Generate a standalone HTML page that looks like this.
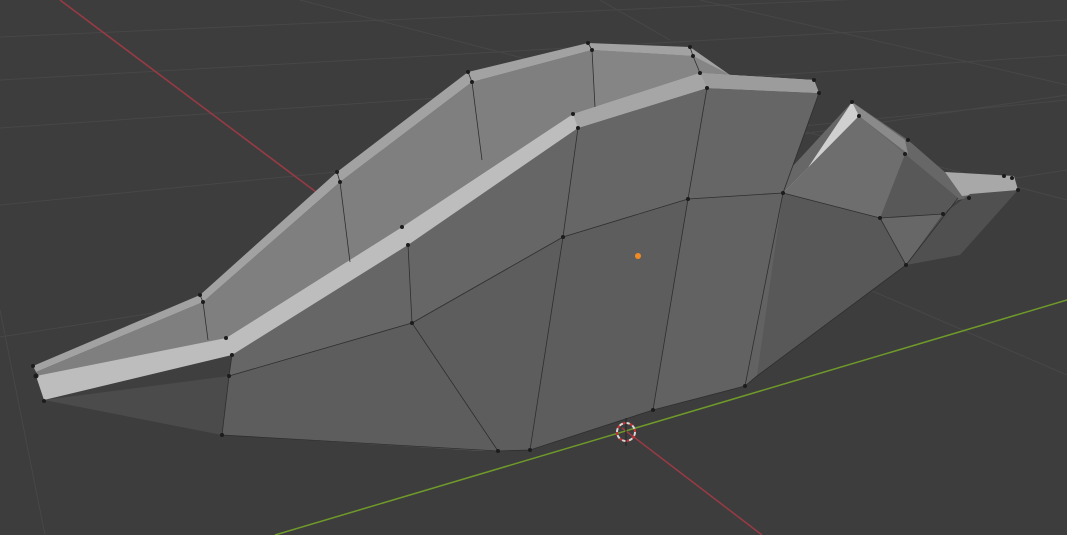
<!DOCTYPE html>
<html><head><style>
html,body{margin:0;padding:0;background:#3d3d3d;width:1067px;height:535px;overflow:hidden}
svg{display:block}
</style></head><body>
<svg width="1067" height="535" viewBox="0 0 1067 535" xmlns="http://www.w3.org/2000/svg">
<rect width="1067" height="535" fill="#3d3d3d"/>
<g stroke="#474747" stroke-width="1" fill="none">
<line x1="0" y1="37" x2="1067" y2="-10"/>
<line x1="0" y1="80" x2="1067" y2="20"/>
<line x1="0" y1="128" x2="1067" y2="55"/>
<line x1="0" y1="205" x2="1067" y2="100"/>
<line x1="0" y1="337" x2="1067" y2="170"/>
<line x1="390" y1="195" x2="1067" y2="95"/>
<line x1="300" y1="0" x2="1067" y2="200"/>
<line x1="700" y1="0" x2="1067" y2="85"/>
<line x1="870" y1="290" x2="1067" y2="375"/>
<line x1="0" y1="310" x2="45" y2="535"/>
<line x1="600" y1="0" x2="670" y2="40"/>
</g>
<line x1="60" y1="0" x2="320" y2="195" stroke="#9a3a45" stroke-width="1.5"/>
<line x1="622" y1="428" x2="762" y2="535" stroke="#9a3a45" stroke-width="1.5"/>
<line x1="275" y1="535" x2="1067" y2="300" stroke="#6f9a2a" stroke-width="1.5"/>
<polygon points="36,372 203,302 340,182 472,82 592,50 693,56 730,75 700,73 573,114 402,227 226,338 40,378" fill="#7f7f7f"/>
<polygon points="592,50 693,56 730,75 700,73 595,107" fill="#858585"/>
<polygon points="33,366 200,295 337,172 468,72 588,43 690,47 730,75 693,56 592,50 472,82 340,182 203,302 36,372" fill="#a2a2a2"/>
<polygon points="780,180 852,102 908,140 970,194 1014,176 1018,190 958,200 943,214 906,265 757,376" fill="#676767"/>
<polygon points="852,102 859,116 908,154 905,140" fill="#8a8a8a"/>
<polygon points="905,154 958,198 943,214 880,218" fill="#585858"/>
<polygon points="945,172 1014,176 1018,190 962,196" fill="#a8a8a8"/>
<polygon points="970,194 1018,190 960,255 906,265 943,214" fill="#505050"/>
<polygon points="791,193 852,102 859,116 783,193" fill="#d0d0d0"/>
<polygon points="859,116 905,154 880,218 783,193" fill="#6e6e6e"/>
<polygon points="44,400 232,355 408,245 578,128 707,88 819,93 783,193 688,199 563,237 412,323 229,376" fill="#666"/>
<polygon points="229,376 412,323 563,237 688,199 783,193 880,218 906,265 757,376 745,386 653,410 530,450 482,451 222,435" fill="#5d5d5d"/>
<polygon points="688,199 783,193 757,376 745,386 653,410" fill="#626262"/>
<polygon points="783,193 880,218 906,265 757,376" fill="#585858"/>
<polygon points="44,400 229,376 222,435" fill="#4b4b4b"/>
<polygon points="40,378 226,338 232,355 229,376 44,400" fill="#3f3f3f"/>
<polygon points="36,376 226,338 402,227 573,114 700,73 814,80 819,93 707,88 578,128 408,245 232,355 44,400" fill="#bdbdbd"/>
<polygon points="700,73 814,80 819,93 707,88" fill="#9c9c9c"/>
<polygon points="573,114 700,73 707,88 578,128" fill="#a6a6a6"/>
<g stroke="#2e2e2e" stroke-width="0.8" fill="none">
<polyline points="200,295 203,302 208,340"/>
<polyline points="337,172 340,182 350,262"/>
<polyline points="468,72 472,82 482,160"/>
<polyline points="588,43 592,50 595,107"/>
<polyline points="690,47 693,56 700,73"/>
<polyline points="232,355 229,376 222,435"/>
<polyline points="408,245 412,323 498,451"/>
<polyline points="578,128 563,237 530,450"/>
<polyline points="707,88 688,199 653,410"/>
<polyline points="819,93 783,193 745,386"/>
<polyline points="229,376 412,323 563,237 688,199 783,193 880,218 943,214"/>
<polyline points="880,218 906,265"/>
<polyline points="222,435 498,451 530,450 653,410 745,386 757,376 906,265 958,198"/>
</g>
<g fill="#1c1c1c">
<circle cx="33" cy="366" r="2"/><circle cx="36" cy="376" r="2.5"/><circle cx="44" cy="401" r="2"/>
<circle cx="200" cy="295" r="2"/><circle cx="203" cy="302" r="2"/><circle cx="226" cy="338" r="2"/>
<circle cx="232" cy="355" r="2"/><circle cx="229" cy="376" r="2"/><circle cx="222" cy="435" r="2"/>
<circle cx="337" cy="172" r="2"/><circle cx="340" cy="182" r="2"/><circle cx="402" cy="227" r="2"/>
<circle cx="408" cy="245" r="2"/><circle cx="412" cy="323" r="2"/><circle cx="468" cy="72" r="2"/>
<circle cx="472" cy="82" r="2"/><circle cx="588" cy="43" r="2"/><circle cx="592" cy="50" r="2"/>
<circle cx="690" cy="47" r="2"/><circle cx="693" cy="56" r="2"/><circle cx="573" cy="114" r="2"/>
<circle cx="578" cy="128" r="2"/><circle cx="700" cy="73" r="2"/><circle cx="707" cy="88" r="2"/>
<circle cx="814" cy="80" r="2"/><circle cx="819" cy="93" r="2"/><circle cx="563" cy="237" r="2"/>
<circle cx="688" cy="199" r="2"/><circle cx="783" cy="193" r="2"/><circle cx="880" cy="218" r="2"/>
<circle cx="498" cy="451" r="2"/><circle cx="530" cy="450" r="2"/><circle cx="653" cy="410" r="2"/>
<circle cx="745" cy="386" r="2"/><circle cx="906" cy="265" r="2"/><circle cx="943" cy="214" r="2"/>
<circle cx="852" cy="102" r="2"/><circle cx="859" cy="116" r="2"/><circle cx="908" cy="140" r="2"/>
<circle cx="905" cy="154" r="2"/><circle cx="969" cy="198" r="2"/><circle cx="1018" cy="190" r="2"/>
<circle cx="1004" cy="176" r="2"/><circle cx="1012" cy="178" r="2"/>
</g>
<circle cx="638" cy="256" r="3" fill="#f08a24"/>
<circle cx="626" cy="432" r="9" fill="none" stroke="#d8d8d8" stroke-width="2" stroke-dasharray="4 3"/>
<circle cx="626" cy="432" r="9" fill="none" stroke="#c33" stroke-width="2" stroke-dasharray="3 4" stroke-dashoffset="3"/>
<line x1="626" y1="418" x2="626" y2="446" stroke="#222" stroke-width="1"/>
</svg>
</body></html>
